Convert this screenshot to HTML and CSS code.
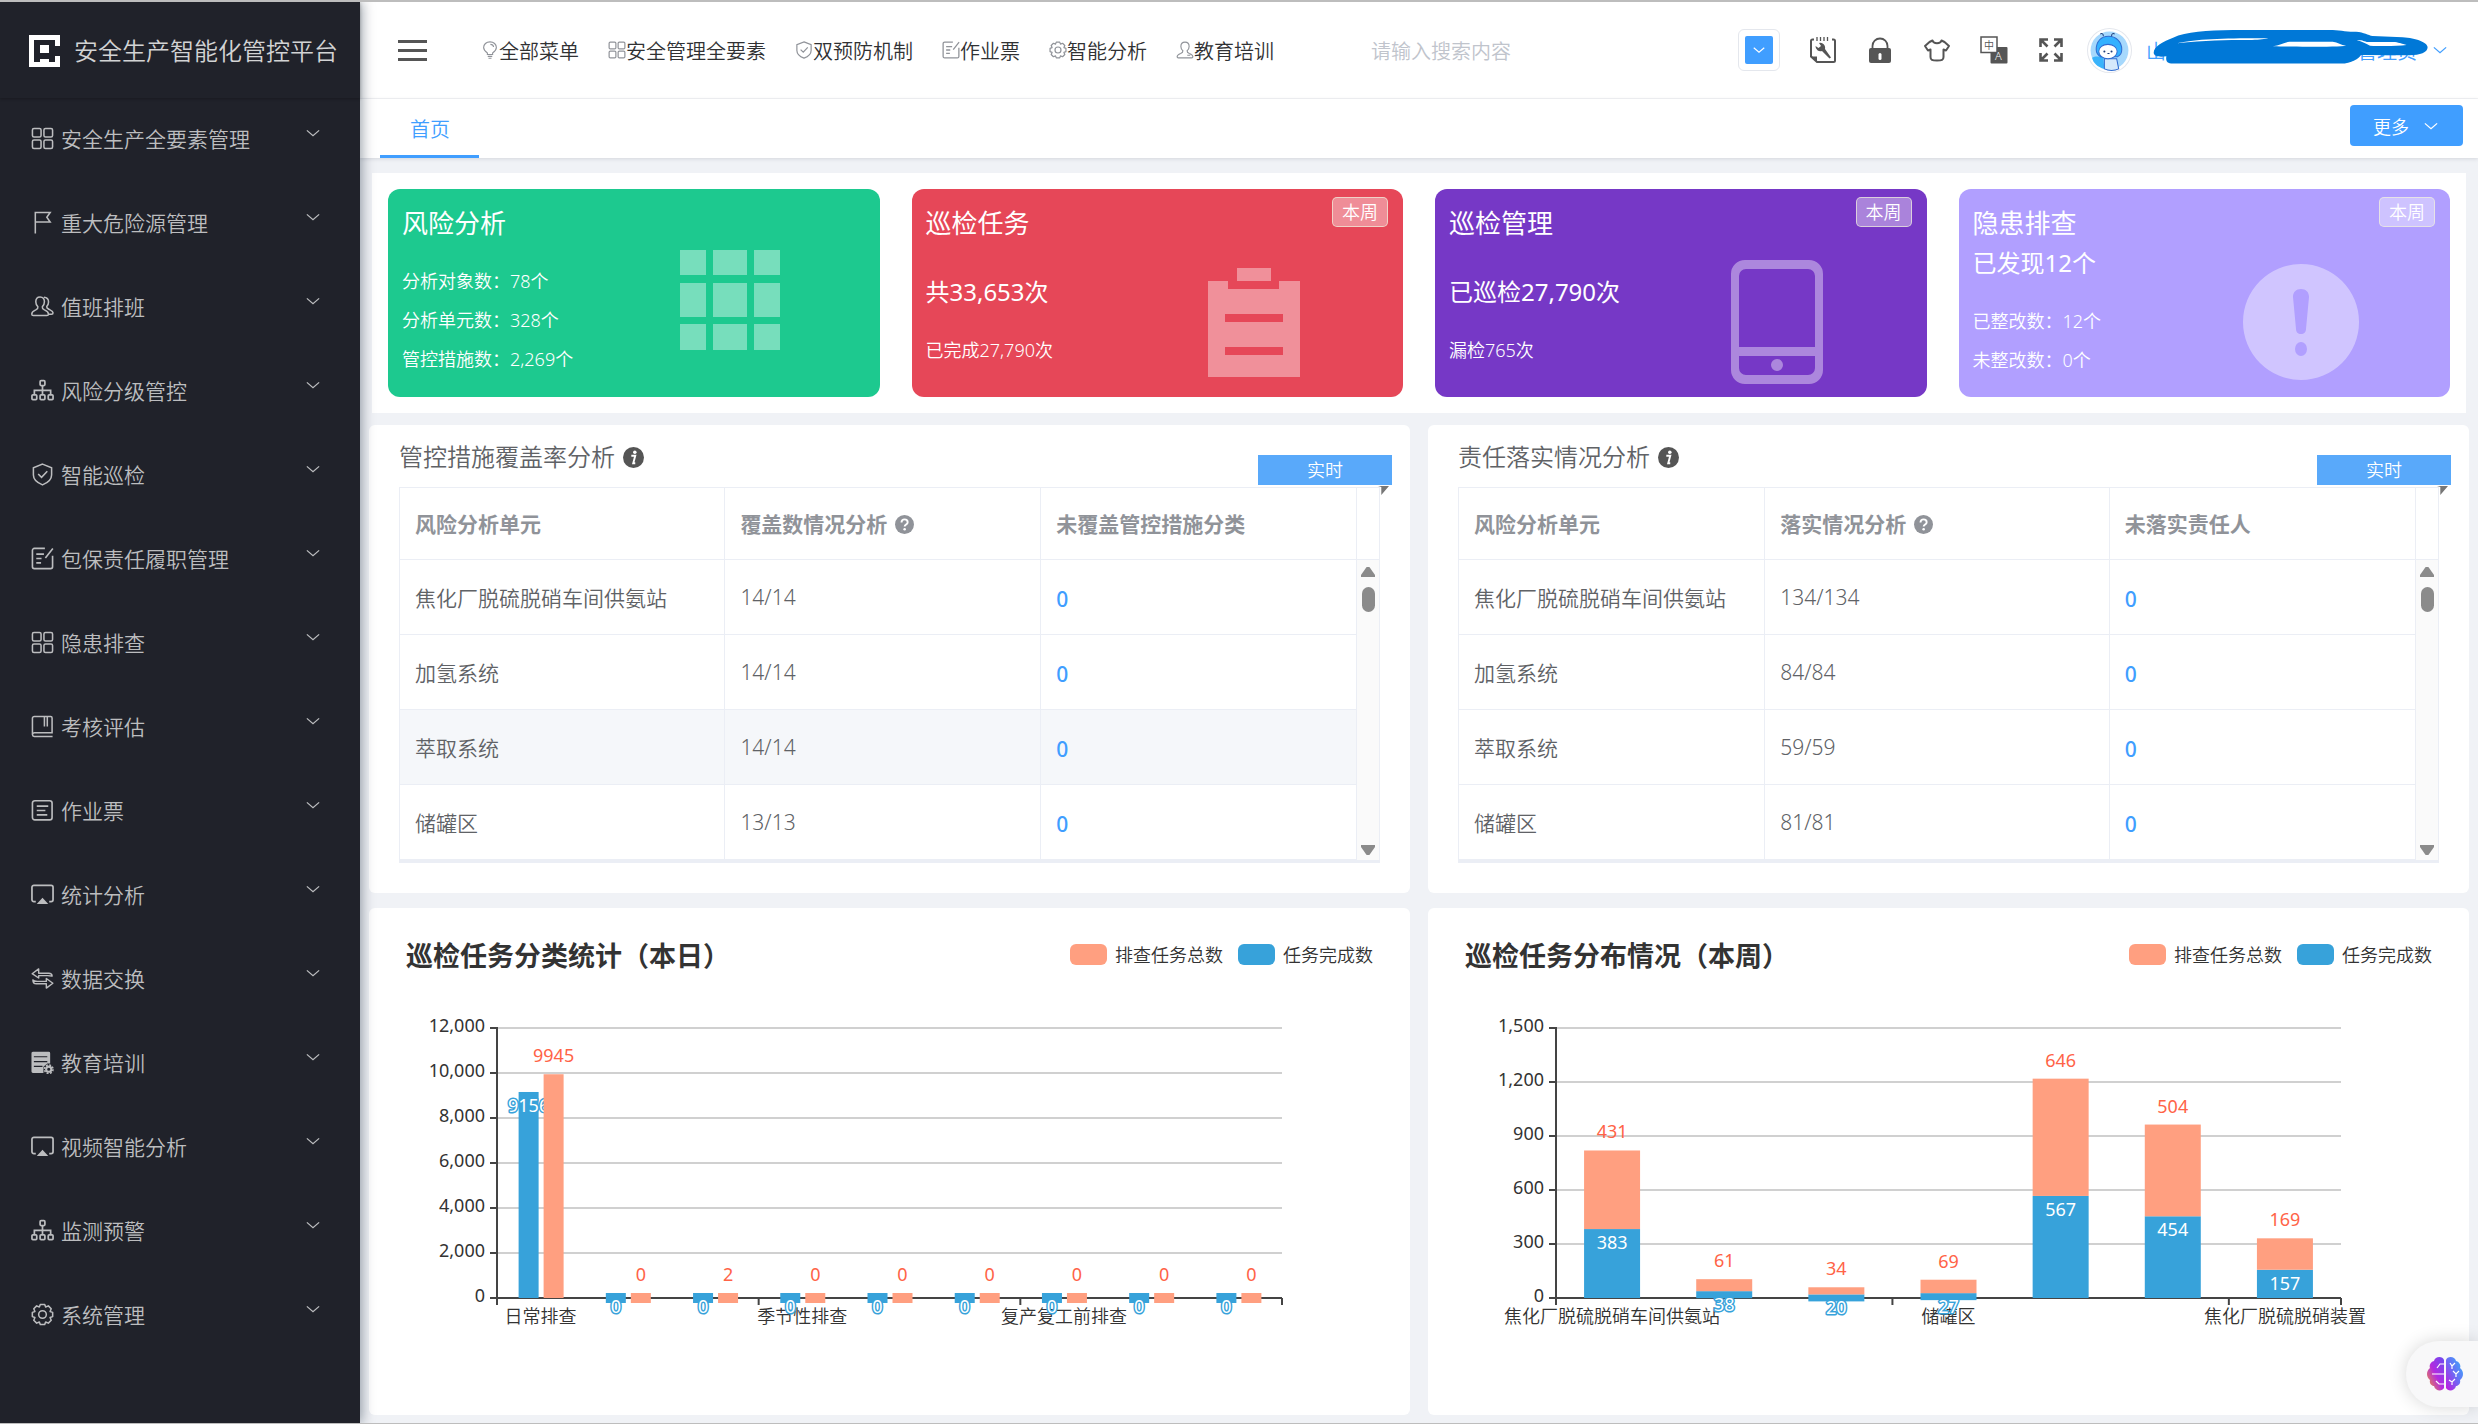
FILE: index.html
```html
<!DOCTYPE html>
<html lang="zh-CN">
<head>
<meta charset="utf-8">
<title>安全生产智能化管控平台</title>
<link rel="stylesheet" href="styles.css">
</head>
<body>
<svg class="sprite" aria-hidden="true">
  <symbol id="i-grid" viewBox="0 0 24 24"><g fill="none" stroke="currentColor" stroke-width="1.6"><rect x="1.5" y="1.5" width="9" height="9" rx="1.6"/><rect x="13.5" y="1.5" width="9" height="9" rx="1.6"/><rect x="1.5" y="13.5" width="9" height="9" rx="1.6"/><rect x="13.5" y="13.5" width="9" height="9" rx="1.6"/></g></symbol>
  <symbol id="i-flag" viewBox="0 0 24 24"><path d="M4.500 23.500V1.500H20L16.500 6.500 20 11.500H4.500" fill="none" stroke="currentColor" stroke-width="1.600"/></symbol>
  <symbol id="i-users" viewBox="0 0 24 24"><g fill="none" stroke="currentColor" stroke-width="1.600" stroke-linejoin="round"><path d="M9.500 2C6.500 2 5 4.200 5 7c0 2.700 1.200 4.300 2.200 5.300.3 1.700-.7 2.400-2.200 3.200-2.400 1.200-4.200 1.900-4.200 4.300 0 1 .7 1.700 1.600 1.700h14.200c.9 0 1.600-.7 1.600-1.700 0-2.400-1.800-3.100-4.200-4.300-1.500-.8-2.500-1.500-2.200-3.200 1-1 2.200-2.600 2.200-5.300 0-2.800-1.500-5-4.500-5z"/><path d="M13.500 2.300c3 .2 4.800 2 4.800 5 0 2.300-1 3.800-1.900 4.700-.2 1.500.8 2.200 2.200 2.900 2.400 1.200 4.400 1.700 4.400 3.600 0 1-.6 1.500-1.500 1.500h-3"/></g></symbol>
  <symbol id="i-user" viewBox="0 0 24 24"><path d="M12 1.500c-3.800 0-5.500 2.500-5.500 5.700 0 2.800 1.400 4.700 2.700 5.800.2 2-1 2.800-3 3.700-2.700 1.100-4.700 2-4.700 4.300 0 .9.600 1.500 1.500 1.500h18c.9 0 1.500-.6 1.500-1.500 0-2.300-2-3.200-4.700-4.300-2-.9-3.200-1.700-3-3.700 1.300-1.100 2.700-3 2.700-5.800 0-3.200-1.700-5.700-5.500-5.700zM15 19h4" fill="none" stroke="currentColor" stroke-width="1.500"/></symbol>
  <symbol id="i-tree" viewBox="0 0 24 24"><g fill="none" stroke="currentColor" stroke-width="1.800"><rect x="9.500" y="1.800" width="5" height="5" rx="1"/><rect x="1" y="16.500" width="5" height="5" rx="1"/><rect x="9.500" y="16.500" width="5" height="5" rx="1"/><rect x="18" y="16.500" width="5" height="5" rx="1"/><path d="M12 7v9.500M3.500 16.500v-4.700h17v4.700"/></g></symbol>
  <symbol id="i-shield" viewBox="0 0 24 24"><path d="M12 1.200 21.500 5v7.500c0 5-5 8.500-9.500 10.300-4.500-1.800-9.500-5.300-9.500-10.300V5zM7.500 11.500l3.500 3.500 6-6.500" fill="none" stroke="currentColor" stroke-width="1.600"/></symbol>
  <symbol id="i-edit" viewBox="0 0 24 24"><path d="M14.500 1.500H3.500a2 2 0 0 0-2 2v17a2 2 0 0 0 2 2h17a2 2 0 0 0 2-2V9M5.500 7.500h8M5.500 12h5.500M5.500 16.500h5M15 11.500 22.800 1.500" fill="none" stroke="currentColor" stroke-width="1.700"/></symbol>
  <symbol id="i-book" viewBox="0 0 24 24"><path d="M22.500 22.500H3.500a2.300 2.300 0 0 1-2-2.200V3.500a2 2 0 0 1 2-2h17a1.500 1.500 0 0 1 1.500 1.500v15.500H4a2 2 0 0 0-2.400 1.700M14 2v10M17 2v10" fill="none" stroke="currentColor" stroke-width="1.600"/></symbol>
  <symbol id="i-doc" viewBox="0 0 24 24"><g fill="none" stroke="currentColor" stroke-width="1.700"><rect x="1.500" y="1.800" width="20.500" height="20" rx="2.500"/><path d="M6 7.500h12M6 12h9M6 16.500h11"/></g></symbol>
  <symbol id="i-screen" viewBox="0 0 24 24"><path d="M5 19.500H3a2 2 0 0 1-2-2V4.500a2 2 0 0 1 2-2h18a2 2 0 0 1 2 2v13a2 2 0 0 1-2 2h-2" fill="none" stroke="currentColor" stroke-width="1.800"/><path d="M12 15.500 18 22H6z" fill="currentColor"/></symbol>
  <symbol id="i-swap" viewBox="0 0 24 24"><path d="M22 9.500c0-2-1.200-3-3.500-3H8V2L1.200 7 8 11.500V9h9.500c2.500 0 4 .2 4.500.5zM2 13.500c0 2 1.200 4 3.500 4H16V22l6.800-5-6.800-5v3H6.500c-2.500 0-4-.5-4.500-1.500z" fill="none" stroke="currentColor" stroke-width="1.500" stroke-linejoin="round"/></symbol>
  <symbol id="i-list" viewBox="0 0 24 24"><path d="M2 .8h16.500a1.500 1.500 0 0 1 1.500 1.500V13h-3l-4 3.500V23H2a1.500 1.500 0 0 1-1.500-1.500v-19A1.500 1.500 0 0 1 2 .8z" fill="currentColor"/><path d="M3 6h14M3 11h14M3 16h9" stroke="#20222a" stroke-width="1.300"/><circle cx="18.500" cy="19" r="2.700" fill="none" stroke="currentColor" stroke-width="2.200"/><circle cx="18.500" cy="19" r="4.500" fill="none" stroke="currentColor" stroke-width="1.600" stroke-dasharray="2 1.530"/></symbol>
  <symbol id="i-gear" viewBox="0 0 24 24"><g fill="none" stroke="currentColor" stroke-width="1.600" stroke-linejoin="round"><path d="M9.700 1.500h4.600l1 2.700 2.800-1.200 3 3-1.200 2.800 2.700 1v4.400l-2.700 1 1.200 2.800-3 3-2.800-1.200-1 2.700H9.700l-1-2.700L5.900 21l-3-3 1.200-2.800-2.700-1V9.800l2.700-1L2.900 6l3-3 2.800 1.200z"/><circle cx="12" cy="12" r="4"/></g></symbol>
  <symbol id="i-bulb" viewBox="0 0 24 24"><path d="M8.500 18v-2C5.500 14 3.500 12 3.500 8.800 3.500 4.500 7 1.200 12 1.200s8.500 3.300 8.500 7.600c0 3.200-2 5.200-5 7.200v2zM9 20.500h6M10 23h4M12.500 4.500c2.500 0 4 1.500 4.300 3.500" fill="none" stroke="currentColor" stroke-width="1.500"/></symbol>
  <symbol id="i-down" viewBox="0 0 16 16"><path d="M1 5l7 6 7-6" fill="none" stroke="currentColor" stroke-width="1.500"/></symbol>
  <symbol id="i-info" viewBox="0 0 24 24"><circle cx="12" cy="12" r="12" fill="currentColor"/><circle cx="13.500" cy="6" r="2" fill="#fff"/><path d="M9.500 10h4.500l-2.300 8.500h2.300" fill="none" stroke="#fff" stroke-width="2.200"/></symbol>
  <symbol id="i-help" viewBox="0 0 24 24"><circle cx="12" cy="12" r="12" fill="currentColor"/><path d="M8.200 9.500C8.200 7 9.800 5.500 12 5.500s4 1.300 4 3.500c0 3-3.800 2.800-3.800 5.500" fill="none" stroke="#fff" stroke-width="2.400"/><circle cx="12.200" cy="18" r="1.600" fill="#fff"/></symbol>
</svg>

<div class="app">
  <aside class="side">
    <div class="brand">
      <svg class="brand-logo" viewBox="0 0 31 32"><path d="M0 0h31v11h-5V5H5v22h6v-3h9v3h6v-6h5v11H0z" fill="#fff"/><path d="M11 10h9v8h-9z" fill="#fff"/></svg>
      <span>安全生产智能化管控平台</span>
    </div>
    <nav class="menu">
      <a href="#"><svg><use href="#i-grid"/></svg><span>安全生产全要素管理</span><svg class="arrow"><use href="#i-down"/></svg></a>
      <a href="#"><svg><use href="#i-flag"/></svg><span>重大危险源管理</span><svg class="arrow"><use href="#i-down"/></svg></a>
      <a href="#"><svg><use href="#i-users"/></svg><span>值班排班</span><svg class="arrow"><use href="#i-down"/></svg></a>
      <a href="#"><svg><use href="#i-tree"/></svg><span>风险分级管控</span><svg class="arrow"><use href="#i-down"/></svg></a>
      <a href="#"><svg><use href="#i-shield"/></svg><span>智能巡检</span><svg class="arrow"><use href="#i-down"/></svg></a>
      <a href="#"><svg><use href="#i-edit"/></svg><span>包保责任履职管理</span><svg class="arrow"><use href="#i-down"/></svg></a>
      <a href="#"><svg><use href="#i-grid"/></svg><span>隐患排查</span><svg class="arrow"><use href="#i-down"/></svg></a>
      <a href="#"><svg><use href="#i-book"/></svg><span>考核评估</span><svg class="arrow"><use href="#i-down"/></svg></a>
      <a href="#"><svg><use href="#i-doc"/></svg><span>作业票</span><svg class="arrow"><use href="#i-down"/></svg></a>
      <a href="#"><svg><use href="#i-screen"/></svg><span>统计分析</span><svg class="arrow"><use href="#i-down"/></svg></a>
      <a href="#"><svg><use href="#i-swap"/></svg><span>数据交换</span><svg class="arrow"><use href="#i-down"/></svg></a>
      <a href="#"><svg><use href="#i-list"/></svg><span>教育培训</span><svg class="arrow"><use href="#i-down"/></svg></a>
      <a href="#"><svg><use href="#i-screen"/></svg><span>视频智能分析</span><svg class="arrow"><use href="#i-down"/></svg></a>
      <a href="#"><svg><use href="#i-tree"/></svg><span>监测预警</span><svg class="arrow"><use href="#i-down"/></svg></a>
      <a href="#"><svg><use href="#i-gear"/></svg><span>系统管理</span><svg class="arrow"><use href="#i-down"/></svg></a>
    </nav>
  </aside>

  <div class="main">
    <header class="top">
      <button class="burger" aria-label="折叠菜单"><i></i><i></i><i></i></button>
      <nav class="quick">
        <a href="#"><svg><use href="#i-bulb"/></svg>全部菜单</a>
        <a href="#"><svg><use href="#i-grid"/></svg>安全管理全要素</a>
        <a href="#"><svg><use href="#i-shield"/></svg>双预防机制</a>
        <a href="#"><svg><use href="#i-edit"/></svg>作业票</a>
        <a href="#"><svg><use href="#i-gear"/></svg>智能分析</a>
        <a href="#"><svg><use href="#i-user"/></svg>教育培训</a>
      </nav>
      <input class="search" type="text" placeholder="请输入搜索内容" aria-label="搜索">
      <div class="tools">
        <button class="color" aria-label="主题颜色"><span><svg><use href="#i-down"/></svg></span></button>
        <button aria-label="工具"><svg viewBox="0 0 28 28"><path d="M5 3.500H3.500A1.500 1.500 0 0 0 2 5v15.500l6 5.500h16.500a1.500 1.500 0 0 0 1.500-1.500V5a1.500 1.500 0 0 0-1.500-1.500H23" fill="none" stroke="#555" stroke-width="2"/><path d="M8 1v4M11.500 1v4M15 1v4M18.500 1v4" stroke="#555" stroke-width="1.300"/><path d="M2 20.500h6V26z" fill="#555"/><path d="M10 7a5 5 0 0 1 6 6l6 8.500-1.500 1L13 15a5 5 0 0 1-6.500-5L9.500 12l2.500-2z" fill="#555"/></svg></button>
        <button aria-label="锁屏"><svg viewBox="0 0 28 28"><path d="M6.500 13V10a7.500 7.500 0 0 1 15 0v3" fill="none" stroke="#555" stroke-width="1.800"/><rect x="3" y="12" width="22" height="15" rx="2" fill="#555"/><rect x="12.500" y="17" width="3" height="7" rx="1.500" fill="#fff"/></svg></button>
        <button aria-label="皮肤"><svg viewBox="0 0 28 28"><path d="M9.500 4.500c1 3.500 8 3.500 9 0l3 1.500 4.500 4-3 4.500-2.500-1V21c0 3-1.500 3.500-6.500 3.500S7.500 24 7.500 21v-7.500l-2.500 1L2 10l4.500-4z" fill="none" stroke="#555" stroke-width="2" stroke-linejoin="round"/></svg></button>
        <button aria-label="语言"><svg viewBox="0 0 28 28"><rect x="10.500" y="11" width="17" height="16.500" rx="1" fill="#555"/><rect x="1" y="1" width="16" height="15.500" fill="#fff" stroke="#555" stroke-width="1.500"/><text x="4" y="13" font-size="10" fill="#555">中</text><text x="15" y="24" font-size="11" fill="#fff">A</text></svg></button>
        <button aria-label="全屏"><svg viewBox="0 0 28 28"><path d="M3.500 11V3.500H11M17 3.500h7.500V11M24.500 17v7.500H17M11 24.500H3.500V17M4 4l6.500 6.500M24 4l-6.500 6.500M24 24l-6.500-6.500M4 24l6.500-6.500" fill="none" stroke="#555" stroke-width="2.600"/></svg></button>
      </div>
      <svg class="avatar" viewBox="0 0 44 44"><circle cx="22" cy="22" r="21.500" fill="#fff" stroke="#e4e7ed"/><circle cx="22" cy="22" r="18.500" fill="#a6d8fc"/><path d="M5 29c3-2 9-1 11 0l1 11C10 38 6 34 5 29z" fill="#39b3fb"/><path d="M17 30h12l2 10c-4 2-10 2-14 0z" fill="#d5e9fb" stroke="#2f6bd0"/><path d="M9 21C9 13 14 8 21 8s13 5 13 13c0 3-2 6-4 7L13 28c-3-2-4-4-4-7z" fill="#33b1ff" stroke="#2f6bd0"/><ellipse cx="20.500" cy="23" rx="9" ry="7" fill="#fff" stroke="#2f6bd0"/><path d="M16 8c0-3-2-3-3-2M24 8c0-3 2-3 3-2M20 25h2" fill="none" stroke="#1d3c78"/><circle cx="17" cy="23" r="1" fill="#1d3c78"/><circle cx="24" cy="23" r="1" fill="#1d3c78"/></svg>
      <button class="account"><span>山</span><span>限公司管理员</span>
        <svg class="mask" viewBox="0 0 826 104"><path d="M2 70C0 50 30 35 60 23 100 5 160 1 240 0h290c30 0 50 6 80 5 25 2 35 10 50 13l90 4c40 3 75 15 75 30 0 16-25 25-60 24l-140-1c-5 10-30 26-60 26H60c-20 0-22-10-20-22C20 82 4 80 2 70z" fill="#0078d7"/><path d="M72 40c40-12 160-17 275-15-20 4-30 5-60 5-70 0-130 1-215 10zM360 49c20-3 35-12 50-14h130c15 2 25 10 40 12-20 4-150 4-220 2zM612 30c15 0 20 3 30 6h85c15 3 20 5 35 9-30 4-80 4-110 2-10-6-25-12-40-17z" fill="#fff"/></svg>
      </button>
      <svg class="account-arrow"><use href="#i-down"/></svg>
    </header>

    <div class="tabs">
      <a class="tab" href="#">首页</a>
      <button class="more">更多<svg><use href="#i-down"/></svg></button>
    </div>

    <main class="content">
      <section class="summary">
        <article class="card green">
          <div class="card-text"><h2>风险分析</h2><ul><li>分析对象数：78个</li><li>分析单元数：328个</li><li>管控措施数：2,269个</li></ul></div>
          <svg class="card-icon raised" viewBox="0 0 128 128"><path d="M14 14h26v25H14zM47 14h34v25H47zM88 14h26v25H88zM14 47h26v34H14zM47 47h34v34H47zM88 47h26v34H88zM14 88h26v26H14zM47 88h34v26H47zM88 88h26v26H88z"/></svg>
        </article>
        <article class="card red">
          <div class="card-text"><h2>巡检任务</h2><p class="big apart">共33,653次</p><ul><li>已完成27,790次</li></ul></div>
          <svg class="card-icon" viewBox="0 0 128 128"><path d="M47 10h34v13H47zM18 23h20v8h51v-8h21v96H18zM35 56v8h58v-8zM35 89v8h58v-8z" fill-rule="evenodd"/></svg>
          <span class="badge">本周</span>
        </article>
        <article class="card purple">
          <div class="card-text"><h2>巡检管理</h2><p class="big apart">已巡检27,790次</p><ul><li>漏检765次</li></ul></div>
          <svg class="card-icon" viewBox="0 0 128 128"><path d="M32 2h64a14 14 0 0 1 14 14v96a14 14 0 0 1-14 14H32a14 14 0 0 1-14-14V16A14 14 0 0 1 32 2zM33 11a7 7 0 0 0-7 7v71h76V18a7 7 0 0 0-7-7zM26 98v12a7 7 0 0 0 7 7h62a7 7 0 0 0 7-7V98zM64 101a6 6 0 1 1 0 12 6 6 0 0 1 0-12z" fill-rule="evenodd"/></svg>
          <span class="badge">本周</span>
        </article>
        <article class="card lilac">
          <div class="card-text"><h2>隐患排查</h2><p class="big">已发现12个</p><ul><li>已整改数：12个</li><li>未整改数：0个</li></ul></div>
          <svg class="card-icon" viewBox="0 0 128 128"><path d="M64 6a58 58 0 1 1 0 116A58 58 0 0 1 64 6zM64 31c-5 0-8 3-8 8l3 32c0 3 2 5 5 5s5-2 5-5l3-32c0-5-3-8-8-8zM64 84a6 7 0 1 0 0 14 6 7 0 0 0 0-14z" fill-rule="evenodd"/></svg>
          <span class="badge">本周</span>
        </article>
      </section>

      <div class="pair">
        <section class="panel">
          <h3>管控措施覆盖率分析<svg><use href="#i-info"/></svg></h3>
          <span class="live">实时</span>
          <div class="grid-box">
            <table>
              <thead><tr><th>风险分析单元</th><th>覆盖数情况分析<svg><use href="#i-help"/></svg></th><th>未覆盖管控措施分类</th></tr></thead>
              <tbody>
                <tr><td>焦化厂脱硫脱硝车间供氨站</td><td>14/14</td><td><a href="#">0</a></td></tr>
                <tr><td>加氢系统</td><td>14/14</td><td><a href="#">0</a></td></tr>
                <tr class="hover"><td>萃取系统</td><td>14/14</td><td><a href="#">0</a></td></tr>
                <tr><td>储罐区</td><td>13/13</td><td><a href="#">0</a></td></tr>
              </tbody>
            </table>
            <div class="gutter"><div class="bar"><i class="up"></i><i class="thumb"></i><i class="down"></i></div></div>
          </div>
        </section>
        <section class="panel">
          <h3>责任落实情况分析<svg><use href="#i-info"/></svg></h3>
          <span class="live">实时</span>
          <div class="grid-box duty">
            <table>
              <thead><tr><th>风险分析单元</th><th>落实情况分析<svg><use href="#i-help"/></svg></th><th>未落实责任人</th></tr></thead>
              <tbody>
                <tr><td>焦化厂脱硫脱硝车间供氨站</td><td>134/134</td><td><a href="#">0</a></td></tr>
                <tr><td>加氢系统</td><td>84/84</td><td><a href="#">0</a></td></tr>
                <tr><td>萃取系统</td><td>59/59</td><td><a href="#">0</a></td></tr>
                <tr><td>储罐区</td><td>81/81</td><td><a href="#">0</a></td></tr>
              </tbody>
            </table>
            <div class="gutter"><div class="bar"><i class="up"></i><i class="thumb"></i><i class="down"></i></div></div>
          </div>
        </section>
      </div>

      <div class="pair">
        <section class="panel chart">
          <div class="chart-head"><h3>巡检任务分类统计（本日）</h3><div class="legend"><i class="total"></i>排查任务总数<i class="done"></i>任务完成数</div></div>
          <svg id="chart-day" viewBox="0 0 1041 400"></svg>
        </section>
        <section class="panel chart">
          <div class="chart-head"><h3>巡检任务分布情况（本周）</h3><div class="legend"><i class="total"></i>排查任务总数<i class="done"></i>任务完成数</div></div>
          <svg id="chart-week" viewBox="0 0 1041 400"></svg>
        </section>
      </div>
    </main>
  </div>
</div>

<button class="assistant" aria-label="智能助手">
  <svg viewBox="0 0 36 34"><defs><linearGradient id="bl" x1="1" y1="0" x2="0" y2="1"><stop offset="0" stop-color="#6a4cf0"/><stop offset=".5" stop-color="#b32be0"/><stop offset="1" stop-color="#f39a2b"/></linearGradient><linearGradient id="br" x1="1" y1="0" x2="0" y2="1"><stop offset="0" stop-color="#33b6fb"/><stop offset=".5" stop-color="#6b6cf5"/><stop offset="1" stop-color="#c417dc"/></linearGradient></defs>
  <path d="M17 3c-1-4-9-4-10 1-4 1-5 5-4 7-4 3-4 9 0 12-1 4 2 6 4 6 1 5 8 6 10 2z" fill="url(#bl)"/><path d="M19 3c1-4 9-4 10 1 4 1 5 5 4 7 4 3 4 9 0 12 1 4-2 6-4 6-1 5-8 6-10 2z" fill="url(#br)"/><path d="M17 7h-4l-3 4M17 17H5M17 27h-5l-3-3M23 6l2 3 3-3M25 9v3M26 14l3 3 3-3M29 17v3M22 23l3 2 3-3M25 25v3" fill="none" stroke="#fff" stroke-width="1.200"/></svg>
</button>
<script src="charts.js"></script>
</body>
</html>
```
FILE: styles.css
```css
* { box-sizing: border-box; }
body {
  margin: 0;
  min-height: 100vh;
  border-top: 2px solid #bdbdbd;
  border-bottom: 1px solid #bdbdbd;
  background: #f0f2f6;
  color: #606266;
  font-family: "Noto Sans", "Noto Sans CJK SC", sans-serif;
  font-size: 18px;
  font-weight: 350;
}
h2, h3, p, ul { margin: 0; padding: 0; font-weight: inherit; list-style: none; }
a { color: inherit; text-decoration: none; }
button { border: 0; padding: 0; background: none; font: inherit; color: inherit; cursor: pointer; }
.sprite { display: none; }

.app { display: flex; min-height: calc(100vh - 3px); }

/* sidebar */
.side {
  position: relative;
  z-index: 2;
  flex: 0 0 360px;
  background: #20222a;
  color: #bcbdbf;
  box-shadow: 2px 0 12px rgba(0, 21, 41, .4);
}
.brand {
  display: flex;
  align-items: center;
  gap: 14px;
  height: 96px;
  padding: 0 0 0 29px;
  font-size: 24px;
  color: #d2d3d4;
  box-shadow: 0 1px 3px rgba(0, 0, 0, .25);
}
.brand span { padding-bottom: 2px; }
.brand-logo { width: 31px; height: 32px; margin-top: 2px; }
.menu a {
  display: flex;
  align-items: center;
  gap: 7px;
  height: 84px;
  padding: 0 40px 4px 31px;
  font-size: 21px;
}
.menu svg { width: 23px; height: 23px; }
.menu .arrow { width: 14px; height: 14px; margin: 0 0 10px auto; }

/* top bar */
.main { flex: 1; min-width: 0; }
.top {
  display: flex;
  align-items: center;
  height: 97px;
  padding: 0 31px 0 38px;
  background: #fff;
  border-bottom: 1px solid #f2f3f5;
  font-size: 20px;
}
.burger { display: grid; gap: 6px; width: 29px; margin-right: 54px; }
.burger i { height: 3px; background: #555; }
.quick { display: flex; gap: 29px; color: #303133; white-space: nowrap; }
.quick a { display: flex; align-items: center; }
.quick svg { width: 18px; height: 18px; color: #909399; }
.search {
  flex: 1;
  min-width: 140px;
  margin: 0 17px 0 97px;
  padding: 3px 0 0;
  border: 0;
  outline: 0;
  font: inherit;
}
.search::placeholder { color: #c0c4cc; }
.tools { display: flex; align-items: center; gap: 29px; margin-right: 22px; }
.tools button { display: flex; }
.tools button > svg { width: 28px; height: 28px; }
.tools .color { padding: 6px; border: 1px solid #e4e7ed; border-radius: 6px; }
.color span { display: flex; align-items: center; justify-content: center; width: 28px; height: 28px; border-radius: 2px; background: #409eff; color: #fff; }
.color svg { width: 12px; height: 12px; }
.avatar { flex: none; width: 45px; height: 45px; }
.account {
  position: relative;
  display: flex;
  justify-content: space-between;
  width: 271px;
  margin: 0 16px 0 14px;
  color: #409eff;
}
.mask { position: absolute; left: 7px; top: -6px; width: 275px; }
.account-arrow { flex: none; width: 14px; height: 14px; color: #409eff; }

.tabs {
  display: flex;
  justify-content: space-between;
  height: 59px;
  padding: 0 15px 0 20px;
  background: #fff;
  box-shadow: 0 1px 4px rgba(0, 21, 41, .12);
}
.tab {
  padding: 3px 29px 0 30px;
  border-bottom: 3px solid #409eff;
  color: #409eff;
  font-size: 20px;
  line-height: 56px;
}
.more {
  display: flex;
  align-items: center;
  gap: 15px;
  height: 41px;
  margin-top: 6px;
  padding: 0 25px 0 23px;
  border-radius: 4px;
  background: #409eff;
  color: #fff;
}
.more svg { width: 14px; height: 14px; }

/* summary cards */
.content { padding: 15px 9px 8px; }
.summary {
  display: grid;
  grid-template-columns: repeat(4, 1fr);
  gap: 32px;
  margin: 0 3px 12px;
  padding: 16px;
  background: #fff;
}
.card {
  position: relative;
  display: flex;
  height: 208px;
  padding: 14px;
  border-radius: 12px;
  color: #fff;
  font-weight: 400;
}
.green { background: #1dc98f; }
.red { background: #e64758; }
.purple { background: #7638c6; }
.lilac { background: #b19fff; }
.card-text { flex: 0 0 57%; white-space: nowrap; }
.card h2 { font-size: 26px; line-height: 40px; }
.big { font-size: 24px; line-height: 40px; }
.apart { margin-top: 29px; }
.card ul { margin-top: 19px; font-weight: 350; }
.card li { line-height: 39px; }
.card-icon { width: 128px; height: 128px; margin-top: 55px; fill: rgba(255, 255, 255, .4); }
.card .raised { margin-top: 33px; }
.badge {
  position: absolute;
  top: 8px;
  right: 15px;
  width: 56px;
  border: 1px solid rgba(240, 240, 220, .7);
  border-radius: 5px;
  background: rgba(255, 255, 255, .38);
  font-weight: 350;
  line-height: 28px;
  text-align: center;
}

/* table panels */
.pair { display: grid; grid-template-columns: 1fr 1fr; gap: 18px; margin-bottom: 15px; }
.pair:last-child { margin-bottom: 0; }
.panel {
  position: relative;
  min-width: 0;
  padding: 14px 30px 30px;
  border-radius: 6px;
  background: #fff;
}
.panel h3 { display: flex; align-items: center; gap: 8px; font-size: 24px; line-height: 36px; }
.panel h3 svg { width: 21px; height: 21px; color: #555; }
.live {
  position: absolute;
  top: 30px;
  right: 18px;
  width: 134px;
  background: #59a9fa;
  color: #fff;
  line-height: 30px;
  text-align: center;
}
.live::after {
  content: "";
  position: absolute;
  top: 31px;
  right: 3px;
  width: 11px;
  height: 9px;
  background: #777;
  clip-path: polygon(0 0, 100% 0, 30% 100%, 30% 10%);
}
.grid-box {
  display: flex;
  margin-top: 12px;
  border: 1px solid #ebeef5;
  border-bottom-width: 3px;
  font-size: 21px;
}
.grid-box table { width: 100%; border-collapse: separate; border-spacing: 0; table-layout: fixed; }
.grid-box th, .grid-box td {
  height: 75px;
  padding: 0 15px;
  border-right: 1px solid #ebeef5;
  border-bottom: 1px solid #ebeef5;
  text-align: left;
  font-weight: inherit;
}
.grid-box th { height: 72px; padding-bottom: 2px; color: #909399; font-weight: 700; }
.grid-box th:first-child { width: 34%; }
.duty th:first-child, .duty th:last-child { width: 32%; }
.duty th:first-child { width: 32%; }
.grid-box th svg { width: 19px; height: 19px; margin-left: 8px; vertical-align: -2px; }
.grid-box td a { color: #409eff; font-weight: 500; }
.grid-box td:last-child { padding-top: 3px; }
.hover { background: #f5f7fa; }
.gutter { flex: 0 0 22px; padding-top: 72px; background: linear-gradient(#ebeef5, #ebeef5) 0 71px / 100% 1px no-repeat; }
.bar {
  display: flex;
  flex-direction: column;
  align-items: center;
  height: 100%;
  padding: 7px 0 5px;
  background: #fafafa;
}
.up, .down { width: 14px; height: 10px; background: #8b8b8b; clip-path: polygon(40% 0, 60% 0, 100% 80%, 100% 100%, 0 100%, 0 80%); }
.down { margin-top: auto; clip-path: polygon(40% 100%, 60% 100%, 100% 20%, 100% 0, 0 0, 0 20%); }
.thumb { width: 13px; height: 25px; margin-top: 10px; border-radius: 7px; background: #8b8b8b; }

/* chart panels */
.chart { padding: 0 0 14px; }
.chart-head { display: flex; justify-content: space-between; height: 93px; padding: 28px 37px 0; }
.chart h3 { display: block; font-size: 27px; font-weight: 700; line-height: 40px; color: #333; }
.legend { display: flex; align-items: center; gap: 8px; height: 36px; color: #333; }
.legend i { width: 37px; height: 21px; border-radius: 6px; }
.total { background: #ff9f80; }
.done { margin-left: 7px; background: #37a2da; }
.chart svg { display: block; width: 100%; }
.chart text { font-size: 18px; fill: #333; text-anchor: middle; }
.chart .tick { font-weight: 400; text-anchor: end; }
.split { stroke: #d0d0d0; stroke-width: 2; }
.axis { stroke: #444; stroke-width: 2; }
.b-done { fill: #37a2da; }
.b-total { fill: #ff9f80; }
.chart .l-done { fill: #fff; stroke: #37a2da; stroke-width: 3; font-weight: 400; paint-order: stroke; stroke-linejoin: round; }
.chart .l-total { fill: #ff6347; font-weight: 400; }

.assistant {
  position: fixed;
  z-index: 3;
  right: 0;
  bottom: 17px;
  width: 72px;
  height: 66px;
  padding-left: 21px;
  border-radius: 33px 0 0 33px;
  background: #f8f8f9;
  box-shadow: 0 0 18px rgba(0, 0, 0, .16);
}
.assistant svg { display: block; width: 36px; height: 34px; }
```
FILE: charts.js
```js
const X0 = 128, X1 = 913, TOP = 27, BASE = 297;

const line = (cls, x1, y1, x2, y2) => `<line class="${cls}" x1="${x1}" y1="${y1}" x2="${x2}" y2="${y2}"/>`;
const text = (cls, x, y, s) => `<text class="${cls}" x="${x}" y="${y}">${s}</text>`;
const rect = (cls, x, y, w, h) => `<rect class="${cls}" x="${x}" y="${y}" width="${w}" height="${h}"/>`;

function draw(id, max, step, rows, names, marks, place) {
  const scale = (BASE - TOP) / max;
  const slot = (X1 - X0) / rows.length;
  let out = '';
  for (let v = 0; v <= max; v += step) {
    const y = BASE - v * scale;
    if (v) out += line('split', X0, y, X1, y);
    out += line('axis', X0 - 7, y, X0, y);
    out += text('tick', X0 - 12, y + 4, v.toLocaleString('en-US'));
  }
  out += line('axis', X0, TOP - 1, X0, BASE) + line('axis', X0, BASE, X1, BASE);
  marks.forEach(m => { out += line('axis', X0 + slot * m, BASE, X0 + slot * m, BASE + 7); });
  for (const i in names) out += text('', X0 + slot * (+i + 0.5), BASE + 25, names[i]);

  const parts = rows.map(([done, total], i) => place(X0 + slot * (i + 0.5), done, total, scale));
  for (const p of parts) out += rect('b-done', ...p.done) + text('l-done', p.done[0] + p.done[2] / 2, p.done[1] + 20, p.labels[0]);
  for (const p of parts) out += rect('b-total', ...p.total) + text('l-total', p.total[0] + p.total[2] / 2, p.total[1] - 12, p.labels[1]);
  document.getElementById(id).innerHTML = out;
}

/* side by side; values close to zero keep a short stub on the axis */
function grouped(cx, done, total, scale) {
  const box = (x, v) => v * scale < 5 ? [x, BASE - 5, 20, 10] : [x, BASE - v * scale, 20, v * scale];
  return { done: box(cx - 22, done), total: box(cx + 3, total), labels: [done, total] };
}

function stacked(cx, done, total, scale) {
  const split = BASE - done * scale;
  const top = split - total * scale;
  return { done: [cx - 28, split, 56, Math.max(BASE - split, 7)], total: [cx - 28, top - 1, 56, split - top + 1], labels: [done, total] };
}

draw('chart-day', 12000, 2000,
  [[9156, 9945], [0, 0], [0, 2], [0, 0], [0, 0], [0, 0], [0, 0], [0, 0], [0, 0]],
  { 0: '日常排查', 3: '季节性排查', 6: '复产复工前排查' }, [0, 3, 6, 9], grouped);

draw('chart-week', 1500, 300,
  [[383, 431], [38, 61], [20, 34], [27, 69], [567, 646], [454, 504], [157, 169]],
  { 0: '焦化厂脱硫脱硝车间供氨站', 3: '储罐区', 6: '焦化厂脱硫脱硝装置' }, [0, 3, 6, 7], stacked);
```
